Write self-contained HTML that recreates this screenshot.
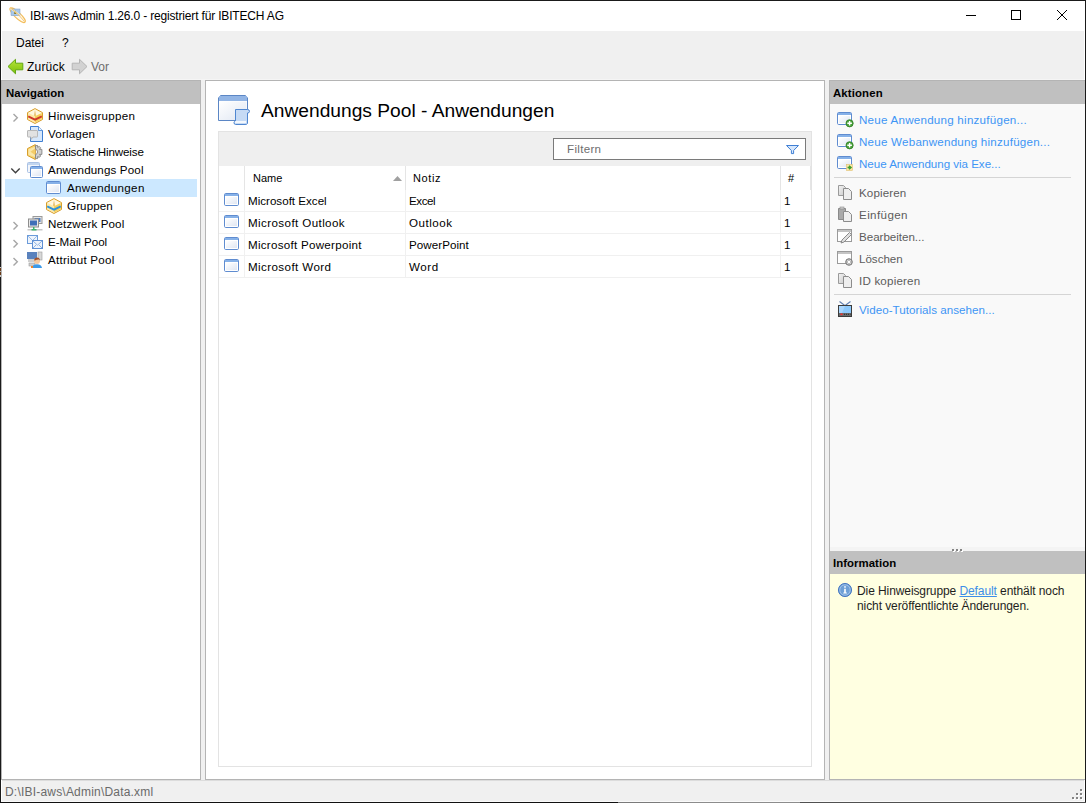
<!DOCTYPE html>
<html><head><meta charset="utf-8">
<style>
*{margin:0;padding:0;box-sizing:border-box}
html,body{width:1086px;height:803px;overflow:hidden;background:#f0f0f0}
body{font-family:"Liberation Sans",sans-serif;font-size:12px;color:#000;position:relative}
.a{position:absolute}
.t{position:absolute;white-space:nowrap;line-height:14px;font-size:11.6px}
svg{position:absolute;display:block;overflow:visible}
.b{font-weight:bold}
.lk{color:#3d95f5}
.ds{color:#5c5c5c}
</style></head><body>
<!-- title bar -->
<div class="a" style="left:0;top:0;width:1086px;height:31px;background:#fff"></div>
<div class="t" id="title" style="letter-spacing:-0.169px;left:30px;top:9px;font-size:12px;color:#000">IBI-aws Admin 1.26.0 - registriert für IBITECH AG</div>
<!-- window buttons -->
<div class="a" style="left:966px;top:15px;width:10px;height:1px;background:#000"></div>
<div class="a" style="left:1011px;top:10px;width:10px;height:10px;border:1px solid #000"></div>
<svg style="left:1057px;top:10px" width="10" height="10" viewBox="0 0 10 10" shape-rendering="crispEdges" fill="#000"><rect x="0" y="0" width="1" height="1"/><rect x="9" y="0" width="1" height="1"/><rect x="1" y="1" width="1" height="1"/><rect x="8" y="1" width="1" height="1"/><rect x="2" y="2" width="1" height="1"/><rect x="7" y="2" width="1" height="1"/><rect x="3" y="3" width="1" height="1"/><rect x="6" y="3" width="1" height="1"/><rect x="4" y="4" width="1" height="1"/><rect x="5" y="4" width="1" height="1"/><rect x="5" y="5" width="1" height="1"/><rect x="4" y="5" width="1" height="1"/><rect x="6" y="6" width="1" height="1"/><rect x="3" y="6" width="1" height="1"/><rect x="7" y="7" width="1" height="1"/><rect x="2" y="7" width="1" height="1"/><rect x="8" y="8" width="1" height="1"/><rect x="1" y="8" width="1" height="1"/><rect x="9" y="9" width="1" height="1"/><rect x="0" y="9" width="1" height="1"/></svg>

<!-- menu -->
<div class="t" style="letter-spacing:-0.025px;left:16px;top:36px;font-size:12px">Datei</div>
<div class="t" style="left:62px;top:36px;font-size:12px">?</div>
<!-- toolbar -->
<div class="t" style="letter-spacing:0.200px;left:27px;top:60px;font-size:12px">Zurück</div>
<div class="t" style="letter-spacing:-0.050px;left:91px;top:60px;font-size:12px;color:#6d6d6d">Vor</div>
<div class="a" style="left:1px;top:79px;width:1084px;height:1px;background:#f5f5f5"></div>

<!-- LEFT PANEL -->
<div class="a" style="left:1px;top:80px;width:200px;height:700px;border:1px solid #b4b4b4;background:#fff"></div>
<div class="a" style="left:2px;top:81px;width:198px;height:23px;background:#c0c0c0"></div>
<div class="t b" style="letter-spacing:-0.011px;left:6px;top:86px;font-size:11.4px">Navigation</div>
<div class="a" style="left:5px;top:179px;width:192px;height:18px;background:#cce8ff"></div>
<div class="t" style="letter-spacing:0.300px;left:48px;top:109px">Hinweisgruppen</div>
<div class="t" style="letter-spacing:0.186px;left:48px;top:127px">Vorlagen</div>
<div class="t" style="letter-spacing:-0.118px;left:48px;top:145px">Statische Hinweise</div>
<div class="t" style="letter-spacing:0.143px;left:48px;top:163px">Anwendungs Pool</div>
<div class="t" style="letter-spacing:0.320px;left:67px;top:181px">Anwendungen</div>
<div class="t" style="letter-spacing:0.117px;left:67px;top:199px">Gruppen</div>
<div class="t" style="letter-spacing:0.125px;left:48px;top:217px">Netzwerk Pool</div>
<div class="t" style="letter-spacing:-0.010px;left:48px;top:235px">E-Mail Pool</div>
<div class="t" style="letter-spacing:0.267px;left:48px;top:253px">Attribut Pool</div>

<!-- CENTER PANEL -->
<div class="a" style="left:205px;top:80px;width:620px;height:700px;border:1px solid #b4b4b4;background:#fff"></div>
<div class="t" style="letter-spacing:0.000px;left:261px;top:100px;font-size:19.2px;line-height:22px">Anwendungs Pool - Anwendungen</div>
<!-- grid -->
<div class="a" style="left:218px;top:131px;width:594px;height:636px;border:1px solid #e3e3e3;background:#fff"></div>
<div class="a" style="left:219px;top:132px;width:592px;height:34px;background:#efefef"></div>
<div class="a" style="left:553px;top:138px;width:253px;height:22px;border:1px solid #7a7a7a;background:#fff"></div>
<div class="t" style="letter-spacing:0.300px;left:567px;top:142px;color:#6d6d6d">Filtern</div>
<!-- header -->
<div class="a" style="left:244px;top:166px;width:1px;height:24px;background:#e5e5e5"></div>
<div class="a" style="left:405px;top:166px;width:1px;height:24px;background:#e5e5e5"></div>
<div class="a" style="left:780px;top:166px;width:1px;height:24px;background:#e5e5e5"></div>
<div class="a" style="left:810px;top:166px;width:1px;height:24px;background:#e5e5e5"></div>
<div class="t" style="letter-spacing:0.000px;left:253px;top:171px;font-size:11px">Name</div>
<div class="t" style="letter-spacing:0.625px;left:413px;top:171px;font-size:11px">Notiz</div>
<div class="t" style="left:788px;top:171px;font-size:11px">#</div>
<svg style="left:393px;top:176px" width="9" height="5" viewBox="0 0 9 5"><path d="M0 5L4.5 0L9 5Z" fill="#a0a0a0"/></svg>
<!-- rows -->
<div class="a" style="left:244px;top:190px;width:1px;height:88px;background:#f0f0f0"></div>
<div class="a" style="left:405px;top:190px;width:1px;height:88px;background:#f0f0f0"></div>
<div class="a" style="left:780px;top:190px;width:1px;height:88px;background:#f0f0f0"></div>
<div class="a" style="left:219px;top:211px;width:592px;height:1px;background:#f0f0f0"></div>
<div class="a" style="left:219px;top:233px;width:592px;height:1px;background:#f0f0f0"></div>
<div class="a" style="left:219px;top:255px;width:592px;height:1px;background:#f0f0f0"></div>
<div class="a" style="left:219px;top:277px;width:592px;height:1px;background:#f0f0f0"></div>
<div class="t" style="letter-spacing:0.007px;left:248px;top:194px">Microsoft Excel</div>
<div class="t" style="letter-spacing:0.400px;left:248px;top:216px">Microsoft Outlook</div>
<div class="t" style="letter-spacing:0.274px;left:248px;top:238px">Microsoft Powerpoint</div>
<div class="t" style="letter-spacing:0.400px;left:248px;top:260px">Microsoft Word</div>
<div class="t" style="letter-spacing:-0.425px;left:409px;top:194px">Excel</div>
<div class="t" style="letter-spacing:0.500px;left:409px;top:216px">Outlook</div>
<div class="t" style="letter-spacing:0.056px;left:409px;top:238px">PowerPoint</div>
<div class="t" style="letter-spacing:0.567px;left:409px;top:260px">Word</div>
<div class="t" style="left:784px;top:194px">1</div>
<div class="t" style="left:784px;top:216px">1</div>
<div class="t" style="left:784px;top:238px">1</div>
<div class="t" style="left:784px;top:260px">1</div>

<!-- RIGHT PANEL -->
<div class="a" style="left:829px;top:80px;width:256px;height:700px;border-left:1px solid #b4b4b4;border-top:1px solid #b4b4b4;border-bottom:1px solid #b4b4b4;background:#f9f9f9"></div>
<div class="a" style="left:830px;top:81px;width:255px;height:23px;background:#c0c0c0"></div>
<div class="t b" style="letter-spacing:0.129px;left:833px;top:86px;font-size:11.4px">Aktionen</div>
<div class="t lk" style="letter-spacing:0.241px;left:859px;top:113px;font-size:11.6px">Neue Anwendung hinzufügen...</div>
<div class="t lk" style="letter-spacing:0.227px;left:859px;top:135px;font-size:11.6px">Neue Webanwendung hinzufügen...</div>
<div class="t lk" style="letter-spacing:-0.033px;left:859px;top:157px;font-size:11.6px">Neue Anwendung via Exe...</div>
<div class="a" style="left:834px;top:177px;width:237px;height:1px;background:#d5d5d5"></div>
<div class="t ds" style="letter-spacing:0.114px;left:859px;top:186px">Kopieren</div>
<div class="t ds" style="letter-spacing:0.400px;left:859px;top:208px">Einfügen</div>
<div class="t ds" style="letter-spacing:-0.025px;left:859px;top:230px">Bearbeiten...</div>
<div class="t ds" style="letter-spacing:-0.017px;left:859px;top:252px">Löschen</div>
<div class="t ds" style="letter-spacing:0.190px;left:859px;top:274px">ID kopieren</div>
<div class="a" style="left:834px;top:294px;width:237px;height:1px;background:#d5d5d5"></div>
<div class="t lk" style="letter-spacing:0.044px;left:859px;top:303px;font-size:11.6px">Video-Tutorials ansehen...</div>

<div class="a" style="left:830px;top:547px;width:255px;height:4px;background:#f4f4f4"></div>
<div class="a" style="left:830px;top:551px;width:255px;height:23px;background:#c0c0c0"></div>
<div class="t b" style="letter-spacing:0.050px;left:833px;top:556px;font-size:11.4px">Information</div>
<div class="a" style="left:830px;top:574px;width:255px;height:205px;background:#ffffe1"></div>
<div class="t" style="letter-spacing:-0.09px;left:857px;top:584px;font-size:12px;line-height:15px;color:#1e1e1e">Die Hinweisgruppe <span style="color:#3d8ee8;text-decoration:underline">Default</span> enthält noch<br>nicht veröffentlichte Änderungen.</div>

<!-- status bar -->
<div class="t" style="letter-spacing:0.200px;left:5px;top:785px;font-size:12px;color:#6a6a6a">D:\IBI-aws\Admin\Data.xml</div>

<!-- ICON DEFS -->
<svg width="0" height="0" style="position:absolute;left:0;top:0">
<defs>
<linearGradient id="wbody" x1="0" y1="0" x2="1" y2="1"><stop offset="0" stop-color="#ffffff"/><stop offset="1" stop-color="#dfe6f2"/></linearGradient>
<linearGradient id="grn" x1="0" y1="0" x2="0" y2="1"><stop offset="0" stop-color="#b7e43a"/><stop offset="1" stop-color="#7cc00a"/></linearGradient>
<linearGradient id="hexy" x1="0" y1="0" x2="0" y2="1"><stop offset="0" stop-color="#fff4c8"/><stop offset="1" stop-color="#f2c24a"/></linearGradient>
<linearGradient id="doc" x1="0" y1="0" x2="1" y2="1"><stop offset="0" stop-color="#f4f4f4"/><stop offset="1" stop-color="#c9c9c9"/></linearGradient>
<symbol id="win" viewBox="0 0 15 13">
 <rect x="0.5" y="0.5" width="14" height="12" rx="1.2" fill="#fff" stroke="#5f8cd0"/>
 <rect x="1" y="1" width="13" height="2" fill="#86b1e8"/>
 <rect x="2" y="4" width="11" height="7" fill="url(#wbody)"/>
</symbol>
<symbol id="copy" viewBox="0 0 16 16">
 <path d="M1.5 1.5H6.5L8.5 3.5V11.5H1.5Z" fill="url(#doc)" stroke="#9a9a9a"/>
 <path d="M6.5 4.5H11.5L14.5 7.5V15.5H6.5Z" fill="#eeeeee" stroke="#8c8c8c"/>
</symbol>
<symbol id="hex" viewBox="0 0 16 16">
 <path d="M8 0.6L15.5 4.6V11.5L8 15.5L0.5 11.5V4.6Z" fill="#fdf0c0" stroke="#d89e2c" stroke-width="1"/>
 <path d="M8 1.5L14.6 5L8 8.2L1.4 5Z" fill="#fff7df"/>
 <path d="M8 8.2L14.8 5V11L8 14.6Z" fill="#f5cf5a"/>
 <path d="M8 8.2L1.2 5V11L8 14.6Z" fill="#fde9a8"/>
 <path d="M8 2L8.8 7.5L8 8.2L7.2 7.5Z" fill="#e2b046"/>
</symbol>
</defs></svg>

<!-- title app icon -->
<svg style="left:8px;top:6px" width="18" height="18" viewBox="0 0 18 18">
 <ellipse cx="9.6" cy="9.2" rx="10.2" ry="2.9" transform="rotate(43 9.6 9.2)" fill="#fffaf0" stroke="#f3bd5a" stroke-width="1.1"/>
 <rect x="3" y="3" width="9" height="6.7" fill="#a9c8ea" stroke="#7d9cc2" stroke-width="0.5"/>
 <path d="M5.8 7.8L7.3 4.2L8.6 7.9Z" fill="#8b7a1e"/>
 <path d="M2.5 2.6Q8 5.5 12 9.5" fill="none" stroke="#fff2d0" stroke-width="1.6" opacity="0.8"/>
 <path d="M2.3 1.8Q9 6 16.5 15.5" fill="none" stroke="#f0b445" stroke-width="0.9" opacity="0.8"/>
</svg>

<!-- toolbar arrows -->
<svg style="left:0;top:0" width="100" height="80" viewBox="0 0 100 80">
 <path d="M8 66.5L15.5 59.3V63.2H22.8V69.8H15.5V73.8Z" fill="url(#grn)" stroke="#62a712" stroke-width="1"/>
 <path d="M87 66.5L79.5 59.3V63.2H72.2V69.8H79.5V73.8Z" fill="#d2d2d2" stroke="#b4b4b4" stroke-width="1"/>
</svg>

<!-- tree chevrons -->
<svg style="left:0;top:100px" width="30" height="170" viewBox="0 100 30 170">
 <path d="M13.5 114L17.3 117.7L13.5 121.4" fill="none" stroke="#a6a6a6" stroke-width="1.4"/>
 <path d="M11.3 168.6L15.5 172.8L19.7 168.6" fill="none" stroke="#404040" stroke-width="1.4"/>
 <path d="M13.5 222L17.3 225.7L13.5 229.4" fill="none" stroke="#a6a6a6" stroke-width="1.4"/>
 <path d="M13.5 240L17.3 243.7L13.5 247.4" fill="none" stroke="#a6a6a6" stroke-width="1.4"/>
 <path d="M13.5 258L17.3 261.7L13.5 265.4" fill="none" stroke="#a6a6a6" stroke-width="1.4"/>
</svg>

<!-- tree icons -->
<svg style="left:27px;top:108px" width="16" height="16" viewBox="0 0 16 16"><use href="#hex"/><path d="M1.2 8.3L8 11.6L14.8 8.3" fill="none" stroke="#cf3a2a" stroke-width="1.9"/></svg>
<svg style="left:27px;top:126px" width="16" height="16" viewBox="0 0 16 16">
 <path d="M3.5 0.5H11.5L15.5 4.5V15.5H3.5Z" fill="#d6e7fb" stroke="#3f7fd2"/>
 <path d="M11.5 0.5V4.5H15.5" fill="#eaf3fd" stroke="#3f7fd2" stroke-width="0.8"/>
 <path d="M1 4.5H10Q10.5 4.5 10.5 5V10.5Q10.5 11 10 11H6L4 13.5V11H1Q0.5 11 0.5 10.5V5Q0.5 4.5 1 4.5Z" fill="#e2e2e2" stroke="#b8b8b8"/>
</svg>
<svg style="left:27px;top:144px" width="16" height="16" viewBox="0 0 16 16">
 <path d="M8.3 0.6V15.5L0.5 11.5V4.6Z" fill="#f7d677" stroke="#d89e2c" stroke-width="1"/>
 <path d="M8 3V13L1.5 10.8V5.2Z" fill="#fbe7a8"/>
 <path d="M8 4.5V11L3.5 7.7Z" fill="#f0c14e" opacity="0.7"/>
 <path d="M8.5 1.5H10.6V3.3L12.3 2.4L13.6 3.8L12.6 5.4H14.9V10.4H12.6L13.6 12L12.3 13.4L10.6 12.5V14.6H8.5V10.6A2.8 2.8 0 0 0 8.5 5.2Z" fill="#d0d0d0" stroke="#858585" stroke-width="0.9"/>
</svg>
<svg style="left:27px;top:162px" width="16" height="16" viewBox="0 0 16 16">
 <rect x="0.5" y="0.5" width="12" height="10" rx="1" fill="#f3f6fb" stroke="#a9c1e4"/>
 <rect x="1" y="1" width="11" height="2" fill="#c2d6f0"/>
 <rect x="3.5" y="4.5" width="12" height="11" rx="1" fill="#fff" stroke="#5f8cd0"/>
 <rect x="4" y="5" width="11" height="2" fill="#86b1e8"/>
 <rect x="5" y="8" width="9" height="6" fill="url(#wbody)"/>
</svg>
<svg style="left:46px;top:181px" width="15" height="13" viewBox="0 0 15 13"><use href="#win"/></svg>
<svg style="left:46px;top:198px" width="16" height="16" viewBox="0 0 16 16"><use href="#hex"/><path d="M1.2 8.3L8 11.6L14.8 8.3" fill="none" stroke="#2f93d8" stroke-width="1.9"/></svg>
<svg style="left:27px;top:216px" width="16" height="16" viewBox="0 0 16 16">
 <rect x="6" y="0.5" width="9" height="7" fill="#e6e6e6" stroke="#9a9a9a"/>
 <rect x="7.5" y="2" width="6" height="4" fill="#4f7fc4"/>
 <rect x="1.5" y="3" width="10" height="8" fill="#e9e9e9" stroke="#8d8d8d"/>
 <rect x="3" y="4.5" width="7" height="5" fill="#3f6fb8"/>
 <rect x="0.5" y="13" width="15" height="1.5" fill="#c8c8c8"/>
 <rect x="6" y="11" width="1.5" height="3" fill="#3db56f"/>
 <rect x="4.5" y="13" width="5" height="1.5" fill="#3db56f"/>
</svg>
<svg style="left:27px;top:234px" width="16" height="16" viewBox="0 0 16 16">
 <rect x="0.5" y="1.5" width="10" height="8" fill="#eef4fc" stroke="#6b9bda"/>
 <path d="M1 2L5.5 6.5L10 2" fill="none" stroke="#9dbde6"/>
 <rect x="5.5" y="6.5" width="10" height="8" fill="#eef4fc" stroke="#5f90d4"/>
 <path d="M6 7L10.5 11.2L15 7M6 14L9 11M15 14L12 11" fill="none" stroke="#8fb3e2"/>
</svg>
<svg style="left:27px;top:252px" width="16" height="16" viewBox="0 0 16 16">
 <rect x="0" y="0" width="10" height="7" fill="#5a82bd"/>
 <rect x="1" y="7" width="9" height="3" fill="#cfcfcf"/>
 <rect x="2" y="11" width="6" height="3" fill="#cfcfcf" stroke="#9a9a9a" stroke-width="0.6"/>
 <rect x="11" y="0" width="4" height="8" fill="#d8d8d8" stroke="#9a9a9a" stroke-width="0.6"/>
 <circle cx="10" cy="9" r="3" fill="#f4c9a0"/>
 <path d="M7 8.2Q7.5 5.5 10 5.6Q12.8 5.6 13 8.5L12 7.5Q10 7.2 8 8.5Z" fill="#a0522d"/>
 <path d="M5 16Q5.5 12.3 10 12.2Q14.5 12.3 15 16Z" fill="#3d9ae8"/>
 <rect x="4" y="14" width="2" height="2" fill="#f0862a"/>
</svg>

<!-- center header icon -->
<svg style="left:218px;top:95px" width="33" height="30" viewBox="0 0 33 30">
 <path d="M0.5 3L2.5 0.5H27.5L29.5 3V25.5H0.5Z" fill="#fff" stroke="#5b86c5"/>
 <rect x="1" y="1" width="28" height="5" fill="#92b5e5"/>
 <rect x="1.5" y="6.5" width="27" height="18.5" fill="url(#wbody)"/>
 <path d="M17.5 14.5H29.5Q31.5 14.5 31.5 16.5Q31.5 18 29.5 18V28.5Q29 29.5 27 29.5H17.5Q16 29.5 16 27.5Q16 26.3 17.5 26.3Z" fill="#c5daf5" stroke="#4f86d0"/>
 <path d="M17 27L28 27" stroke="#fff" stroke-width="1.6"/>
</svg>

<!-- row icons -->
<svg style="left:224px;top:193px" width="15" height="13" viewBox="0 0 15 13"><use href="#win"/></svg>
<svg style="left:224px;top:215px" width="15" height="13" viewBox="0 0 15 13"><use href="#win"/></svg>
<svg style="left:224px;top:237px" width="15" height="13" viewBox="0 0 15 13"><use href="#win"/></svg>
<svg style="left:224px;top:259px" width="15" height="13" viewBox="0 0 15 13"><use href="#win"/></svg>

<!-- funnel -->
<svg style="left:780px;top:140px" width="24" height="18" viewBox="780 140 24 18">
 <path d="M786.5 145.5H798.5L793.6 150.5V153.6H791.4V150.5Z" fill="#d6e7fc" stroke="#3f7fd4" stroke-width="1"/>
</svg>

<!-- action icons -->
<svg style="left:837px;top:112px" width="17" height="16" viewBox="0 0 17 16"><use href="#win" width="15" height="13"/><circle cx="12.6" cy="11.3" r="3.6" fill="#4aa33a" stroke="#2f7d24" stroke-width="0.8"/><path d="M12.6 9V13.6M10.3 11.3H14.9" stroke="#fff" stroke-width="1.4"/></svg>
<svg style="left:837px;top:134px" width="17" height="16" viewBox="0 0 17 16"><use href="#win" width="15" height="13"/><circle cx="12.6" cy="11.3" r="3.6" fill="#4aa33a" stroke="#2f7d24" stroke-width="0.8"/><path d="M12.6 9V13.6M10.3 11.3H14.9" stroke="#fff" stroke-width="1.4"/></svg>
<svg style="left:837px;top:156px" width="17" height="16" viewBox="0 0 17 16"><use href="#win" width="15" height="13"/><rect x="9.5" y="8.5" width="6" height="6" fill="#fbe7a6" stroke="#e2c070" stroke-width="0.6"/><path d="M10.5 11.5H13.5M12 9.8L14 11.5L12 13.3" fill="none" stroke="#3f9f2f" stroke-width="1.5"/></svg>
<svg style="left:837px;top:184px" width="16" height="16" viewBox="0 0 16 16"><use href="#copy"/></svg>
<svg style="left:837px;top:206px" width="16" height="16" viewBox="0 0 16 16">
 <path d="M1.5 2.5H8.5V13.5H1.5Z" fill="#a9a9a9" stroke="#8a8a8a"/>
 <rect x="3" y="1" width="4" height="2" fill="#d0d0d0" stroke="#8a8a8a" stroke-width="0.6"/>
 <path d="M6.5 5.5H11.5L14.5 8.5V15.5H6.5Z" fill="#eeeeee" stroke="#8c8c8c"/>
</svg>
<svg style="left:837px;top:228px" width="16" height="16" viewBox="0 0 16 16">
 <rect x="0.5" y="1.5" width="14" height="12" fill="#fff" stroke="#9a9a9a"/>
 <rect x="1" y="2" width="13" height="2" fill="#c4c4c4"/>
 <path d="M4 15L5 12L12.5 4.5L14.5 6.5L7 14Z" fill="#e0e0e0" stroke="#7f7f7f" stroke-width="0.9"/>
</svg>
<svg style="left:837px;top:250px" width="16" height="16" viewBox="0 0 16 16">
 <rect x="0.5" y="1.5" width="14" height="12" fill="#fff" stroke="#9a9a9a"/>
 <rect x="1" y="2" width="13" height="2" fill="#c4c4c4"/>
 <circle cx="12" cy="12" r="3.3" fill="#bdbdbd" stroke="#6f6f6f" stroke-width="0.9"/>
 <path d="M10.6 10.6L13.4 13.4M13.4 10.6L10.6 13.4" stroke="#fff" stroke-width="1"/>
</svg>
<svg style="left:837px;top:272px" width="16" height="16" viewBox="0 0 16 16"><use href="#copy"/></svg>
<svg style="left:838px;top:300px" width="14" height="17" viewBox="0 0 14 17">
 <path d="M1.5 1.5L6.5 5.3M12.5 1.5L7.5 5.3" fill="none" stroke="#5f7fb0" stroke-width="1.1"/>
 <rect x="0.5" y="5.5" width="13" height="11" fill="#7dc0f8" stroke="#3c3c3c"/>
 <path d="M1 6H13V13H1Z" fill="#8cc8fb"/>
 <path d="M1 6H7L4 13H1Z" fill="#b5dcff" opacity="0.7"/>
 <rect x="1" y="13" width="12" height="3" fill="#6a6a6a"/>
 <rect x="2.5" y="13.5" width="2" height="1.6" fill="#ff2a2a"/>
 <path d="M6 14.3H12.5" stroke="#2a2a2a" stroke-width="1" stroke-dasharray="1 1"/>
</svg>

<!-- info icon -->
<svg style="left:838px;top:583px" width="14" height="14" viewBox="0 0 14 14">
 <circle cx="7" cy="7" r="6.6" fill="#6e9fd6" stroke="#3d6fbe" stroke-width="0.9"/>
 <circle cx="7" cy="7" r="5.2" fill="none" stroke="#a9c8ec" stroke-width="0.8"/>
 <rect x="6.2" y="3.2" width="1.6" height="1.5" fill="#fff"/>
 <path d="M6.2 5.8H7.8V9.6H8.8V10.6H5.3V9.6H6.2Z" fill="#fff"/>
</svg>

<!-- splitter grips -->
<div class="a" style="left:952px;top:549px;width:2px;height:2px;background:#858585;box-shadow:1px 1px 0 #fff"></div>
<div class="a" style="left:956px;top:549px;width:2px;height:2px;background:#858585;box-shadow:1px 1px 0 #fff"></div>
<div class="a" style="left:960px;top:549px;width:2px;height:2px;background:#858585;box-shadow:1px 1px 0 #fff"></div>
<div class="a" style="left:1080px;top:789px;width:2px;height:2px;background:#858585;box-shadow:1px 1px 0 #fff"></div>
<div class="a" style="left:1076px;top:793px;width:2px;height:2px;background:#858585;box-shadow:1px 1px 0 #fff"></div>
<div class="a" style="left:1080px;top:793px;width:2px;height:2px;background:#858585;box-shadow:1px 1px 0 #fff"></div>
<div class="a" style="left:1072px;top:797px;width:2px;height:2px;background:#858585;box-shadow:1px 1px 0 #fff"></div>
<div class="a" style="left:1076px;top:797px;width:2px;height:2px;background:#858585;box-shadow:1px 1px 0 #fff"></div>
<div class="a" style="left:1080px;top:797px;width:2px;height:2px;background:#858585;box-shadow:1px 1px 0 #fff"></div>
<!-- window frame -->
<div class="a" style="left:1px;top:31px;width:1px;height:49px;background:#fff"></div>
<div class="a" style="left:1px;top:780px;width:1px;height:22px;background:#fff"></div>
<div class="a" style="left:1084px;top:31px;width:1px;height:49px;background:#fff"></div>
<div class="a" style="left:1084px;top:780px;width:1px;height:22px;background:#fff"></div>
<div class="a" style="left:1px;top:801px;width:1084px;height:1px;background:#fafafa"></div>
<div class="a" style="left:2px;top:780px;width:1082px;height:1px;background:#dcdcdc"></div>

<div class="a" style="left:0;top:0;width:1086px;height:1px;background:#1a1a1a"></div>
<div class="a" style="left:0;top:0;width:1px;height:803px;background:#1a1a1a"></div>
<div class="a" style="left:1085px;top:0;width:1px;height:803px;background:#1a1a1a"></div>
<div class="a" style="left:0;top:802px;width:1086px;height:1px;background:linear-gradient(90deg,#111 0,#111 618px,#7a7a7a 618px,#7a7a7a 660px,#8c8c8c 660px,#8c8c8c 800px,#505050 800px)"></div>
<div class="a" style="left:0;top:267px;width:1px;height:10px;background:linear-gradient(180deg,#c8c8c8 0,#c8c8c8 1px,#6a3a16 1px,#6a3a16 4px,#b0b0b0 4px,#b0b0b0 5px,#6a3a16 5px,#6a3a16 8px,#c8c8c8 8px)"></div>
</body></html>
